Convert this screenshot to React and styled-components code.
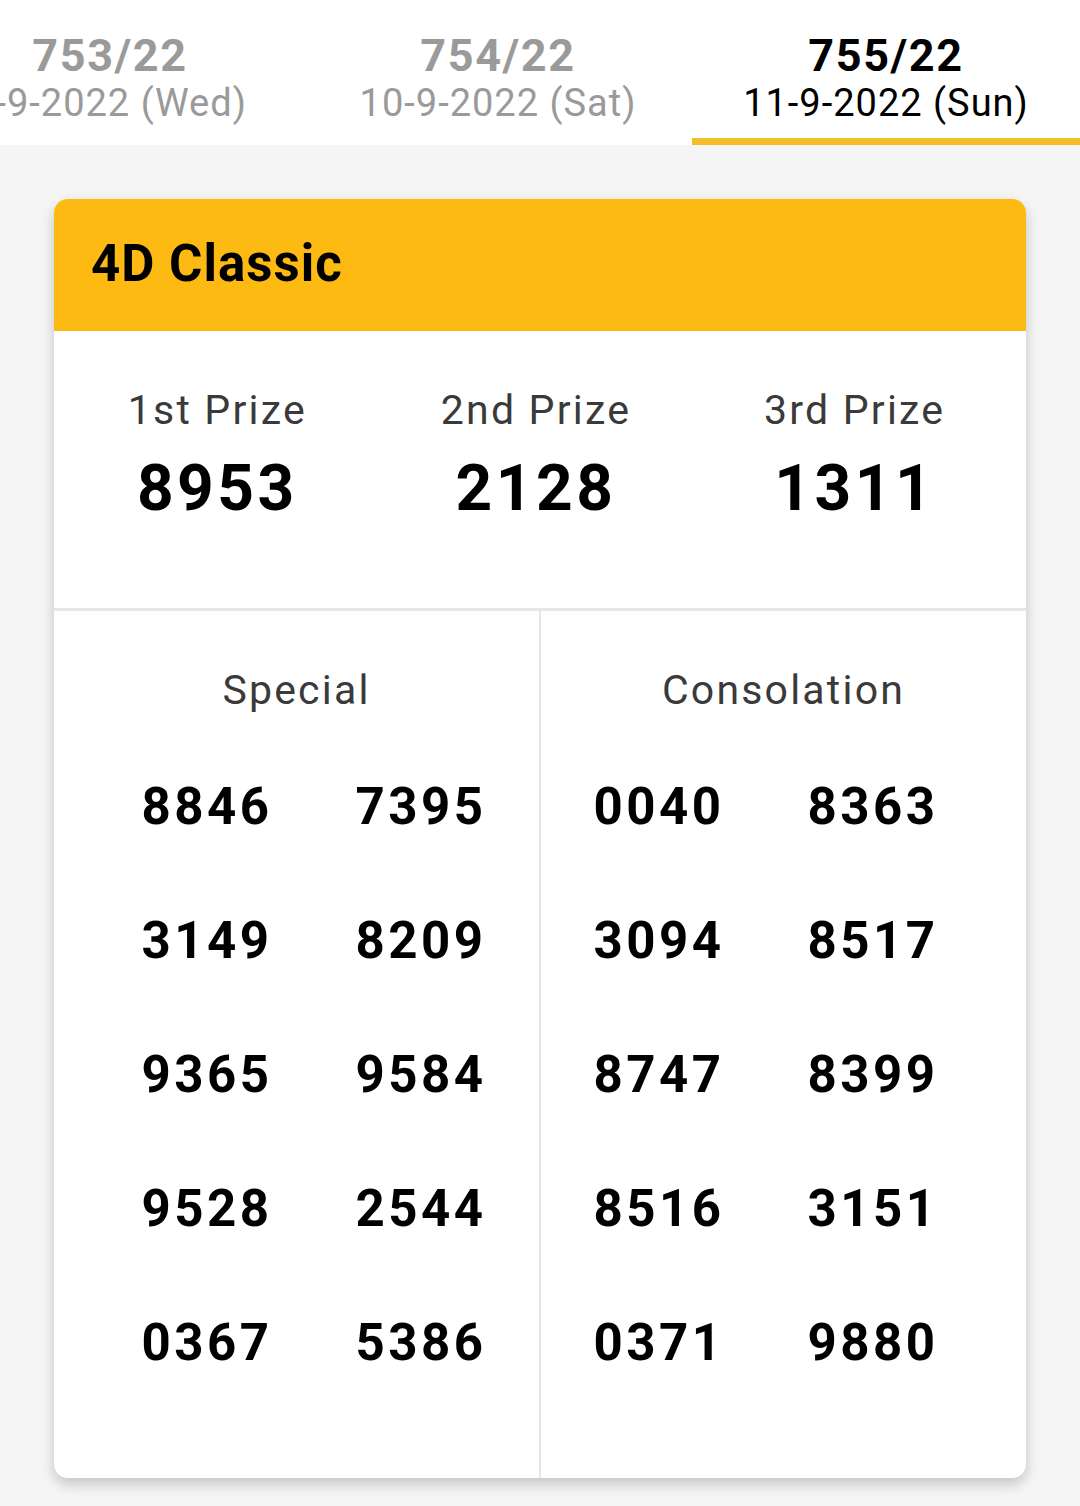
import React from "react";
import styled, { createGlobalStyle } from "styled-components";

const GlobalStyle = createGlobalStyle`
  html, body {
    margin: 0;
    padding: 0;
    background: #f5f5f5;
    font-family: Roboto, "Noto Sans", sans-serif;
  }
`;

const draws = [
  { no: "753/22", date: "7-9-2022 (Wed)" },
  { no: "754/22", date: "10-9-2022 (Sat)" },
  { no: "755/22", date: "11-9-2022 (Sun)", active: true },
];

const prizes = [
  { label: "1st Prize", value: "8953" },
  { label: "2nd Prize", value: "2128" },
  { label: "3rd Prize", value: "1311" },
];

const special = ["8846", "7395", "3149", "8209", "9365", "9584", "9528", "2544", "0367", "5386"];
const consolation = ["0040", "8363", "3094", "8517", "8747", "8399", "8516", "3151", "0371", "9880"];

function App() {
  return (
    <Page>
      <GlobalStyle />
      <TabBar>
        <TabRow>
          {draws.map((d) => (
            <Tab key={d.no} $active={d.active}>
              <DrawNo>{d.no}</DrawNo>
              <DrawDate>{d.date}</DrawDate>
            </Tab>
          ))}
        </TabRow>
      </TabBar>

      <Card>
        <CardHeader>4D Classic</CardHeader>
        <PrizeRow>
          {prizes.map((p) => (
            <Prize key={p.label}>
              <Label>{p.label}</Label>
              <BigNumber>{p.value}</BigNumber>
            </Prize>
          ))}
        </PrizeRow>
        <Lower>
          <Half>
            <Label>Special</Label>
            <NumberGrid $side="left">
              {special.map((n) => (
                <SmallNumber key={n}>{n}</SmallNumber>
              ))}
            </NumberGrid>
          </Half>
          <Half $divider>
            <Label>Consolation</Label>
            <NumberGrid $side="right">
              {consolation.map((n) => (
                <SmallNumber key={n}>{n}</SmallNumber>
              ))}
            </NumberGrid>
          </Half>
        </Lower>
      </Card>
    </Page>
  );
}

export default App;

const Page = styled.div`
  min-height: 1506px;
  background: #f5f5f5;
  overflow: hidden;
`;

const TabBar = styled.div`
  height: 145px;
  background: #fff;
  overflow: hidden;
`;

// the tab strip is scrolled so the active draw sits on the right
const TabRow = styled.div`
  display: flex;
  margin-left: -84px;
`;

const Tab = styled.div`
  flex: 0 0 388px;
  height: 145px;
  box-sizing: border-box;
  padding-top: 31px;
  display: flex;
  flex-direction: column;
  align-items: center;
  color: ${(p) => (p.$active ? "#000" : "#9a9a9a")};
  border-bottom: 7px solid ${(p) => (p.$active ? "#f4bd2a" : "transparent")};
`;

const DrawNo = styled.div`
  font-size: 45px;
  line-height: 50px;
  font-weight: 700;
  letter-spacing: 1.6px;
`;

const DrawDate = styled.div`
  font-size: 38px;
  line-height: 44px;
  letter-spacing: 1px;
  white-space: nowrap;
`;

const Card = styled.div`
  margin: 54px 0 0 54px;
  width: 972px;
  background: #fff;
  border-radius: 14px;
  overflow: hidden;
  box-shadow: 0 6px 14px rgba(0, 0, 0, 0.2);
`;

const CardHeader = styled.div`
  height: 132px;
  box-sizing: border-box;
  padding: 0 0 4px 37px;
  display: flex;
  align-items: center;
  background: #fdba13;
  color: #000;
  font-size: 51px;
  font-weight: 700;
  letter-spacing: 1px;
`;

const PrizeRow = styled.div`
  display: grid;
  grid-template-columns: repeat(3, 1fr);
  padding: 55px 12px 83px 4px;
  border-bottom: 3px solid #e6e6e6;
`;

const Prize = styled.div`
  display: flex;
  flex-direction: column;
  align-items: center;
  gap: 19px;
`;

const Label = styled.div`
  font-size: 41px;
  line-height: 48px;
  color: #3a3a3a;
  text-align: center;
  letter-spacing: 2.2px;
`;

const BigNumber = styled.div`
  font-size: 64px;
  line-height: 72px;
  font-weight: 700;
  color: #000;
  letter-spacing: 3.5px;
`;

const Lower = styled.div`
  display: grid;
  grid-template-columns: 485px 487px;
`;

const Half = styled.div`
  padding: 55px 0 69px;
  border-left: ${(p) => (p.$divider ? "2px solid #e6e6e6" : "none")};
`;

const NumberGrid = styled.div`
  display: grid;
  grid-template-columns: 214px 214px;
  grid-auto-rows: 134px;
  margin-top: 25px;
  padding-left: ${(p) => (p.$side === "left" ? "46px" : "11px")};
`;

const SmallNumber = styled.div`
  display: flex;
  align-items: center;
  justify-content: center;
  font-size: 51px;
  font-weight: 700;
  color: #000;
  letter-spacing: 3.5px;
`;
